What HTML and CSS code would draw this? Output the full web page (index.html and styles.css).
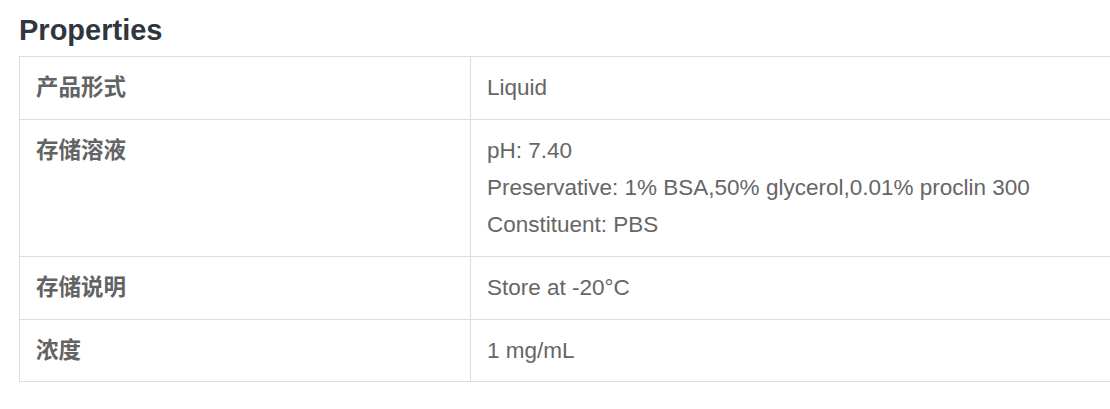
FILE: index.html
```html
<!DOCTYPE html>
<html lang="zh">
<head>
<meta charset="utf-8">
<title>Properties</title>
<link rel="stylesheet" href="styles.css">
</head>
<body>
<section class="props">
  <h2 class="props-title">Properties</h2>
  <table class="props-table">
    <tbody>
      <tr>
        <th class="props-label">产品形式</th>
        <td class="props-value">Liquid</td>
      </tr>
      <tr>
        <th class="props-label">存储溶液</th>
        <td class="props-value">
          <div class="line">pH: 7.40</div>
          <div class="line">Preservative: 1% BSA,50% glycerol,0.01% proclin 300</div>
          <div class="line">Constituent: PBS</div>
        </td>
      </tr>
      <tr>
        <th class="props-label">存储说明</th>
        <td class="props-value">Store at -20°C</td>
      </tr>
      <tr>
        <th class="props-label">浓度</th>
        <td class="props-value">1 mg/mL</td>
      </tr>
    </tbody>
  </table>
</section>
</body>
</html>
```

FILE: styles.css
```css
html, body {
  margin: 0;
  padding: 0;
  overflow: hidden;
  background: #ffffff;
}

body {
  font-family: "Liberation Sans", Arial, "Noto Sans CJK SC", sans-serif;
}

.props {
  padding: 13px 0 0 19px;
  width: 1120px;
}

.props-title {
  margin: 0 0 9px 0;
  font-size: 29px;
  line-height: 34px;
  font-weight: 700;
  color: #303640;
}

.props-table {
  width: 1120px;
  border-collapse: collapse;
  table-layout: fixed;
  font-size: 22.5px;
  line-height: 37px;
  color: #666666;
}

.props-table th,
.props-table td {
  border: 1px solid #dddddd;
  padding: 12px 16px 13px 16px;
  text-align: left;
  vertical-align: top;
}

.props-table tr:last-child th,
.props-table tr:last-child td {
  padding-bottom: 12px;
}

.props-label {
  width: 418px;
  font-weight: 700;
  color: #636363;
}

.props-value {
  font-weight: 400;
}

.line {
  display: block;
}
```
